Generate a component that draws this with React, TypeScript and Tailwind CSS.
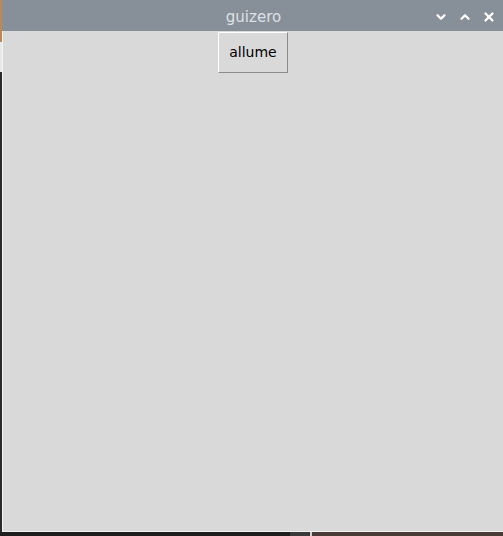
import { FiChevronDown, FiChevronUp, FiX } from 'react-icons/fi'

export default function App() {
  return (
    <div
      className="w-[503px] h-[536px] bg-[#1e1e1e] flex flex-col overflow-hidden"
      style={{ fontFamily: '"DejaVu Sans", "Liberation Sans", sans-serif' }}
    >
      <div className="flex flex-1">
        <div className="w-[2px] flex flex-col">
          <div className="h-[42px] bg-[#b8895a]" />
          <div className="h-[30px] bg-[#e8e8e8]" />
          <div className="flex-1 bg-[#2a2a2a]" />
        </div>

        <div className="flex-1 flex flex-col">
          <div className="h-[31px] bg-[#878f98] flex items-center relative">
            <div className="flex-1 text-center text-[15px] text-[#dde1e5] pl-[2px] pt-[4px]">
              guizero
            </div>
            <div className="absolute right-[7px] top-0 h-full flex items-center gap-[10px] text-white pt-[2px]">
              <FiChevronDown className="w-[14px] h-[14px]" strokeWidth={4} />
              <FiChevronUp className="w-[14px] h-[14px]" strokeWidth={4} />
              <FiX className="w-[14px] h-[14px]" strokeWidth={4} />
            </div>
          </div>

          <div className="flex-1 bg-[#d9d9d9] border-l border-b border-[#f2f2f2] flex flex-col items-center">
            <button className="mt-[1px] w-[70px] h-[41px] bg-[#d9d9d9] border border-t-white border-l-white border-r-[#8a8a8a] border-b-[#8a8a8a] text-[14px] text-black">
              allume
            </button>
          </div>
        </div>
      </div>

      <div className="h-[4px] flex">
        <div className="w-[290px] bg-[#1e1e1e]" />
        <div className="w-[20px] bg-[#3a3a3a]" />
        <div className="w-[2px] bg-[#d0d0d0]" />
        <div className="flex-1 bg-[#4a3b37]" />
      </div>
    </div>
  )
}
